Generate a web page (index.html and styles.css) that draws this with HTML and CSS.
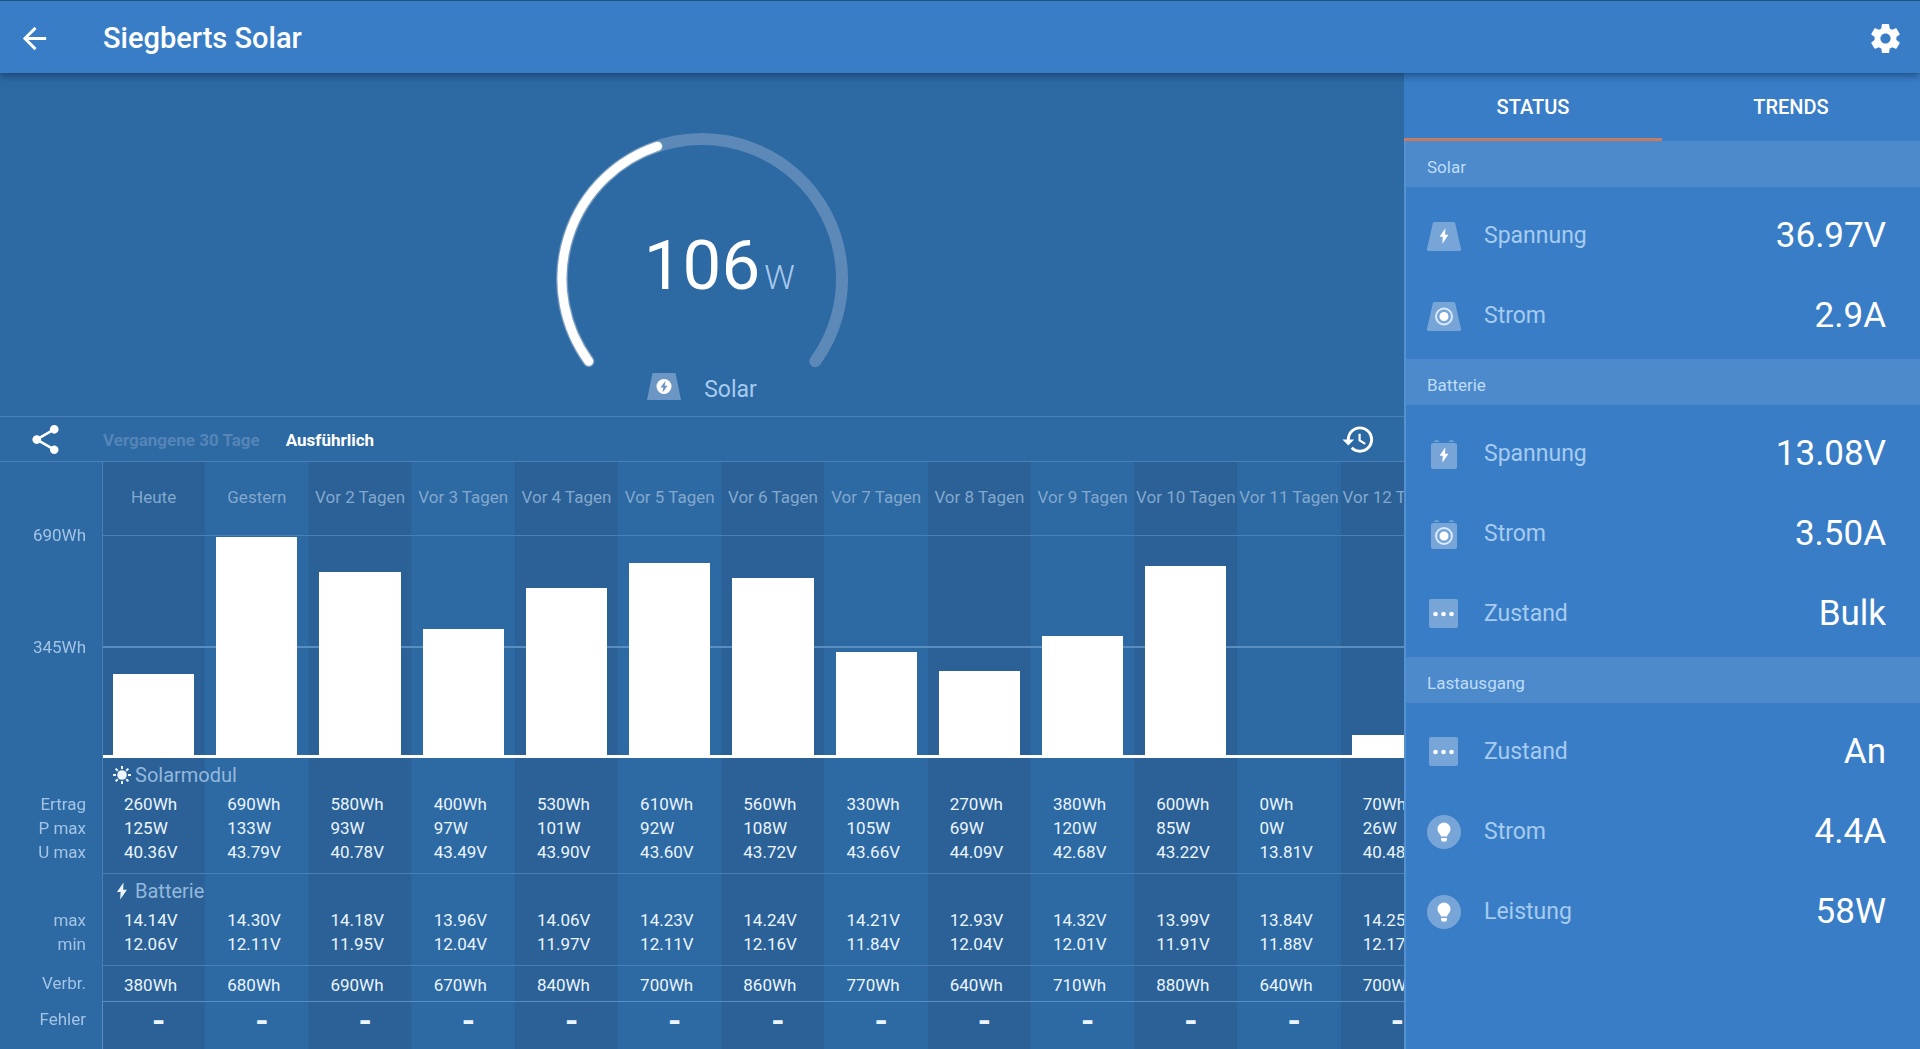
FILE: index.html
```html
<!DOCTYPE html>
<html lang="de">
<head>
<meta charset="utf-8">
<meta name="viewport" content="width=device-width, initial-scale=1">
<title>Siegberts Solar</title>
<link rel="stylesheet" href="styles.css">
</head>
<body>
<svg class="sprite" aria-hidden="true">
  <symbol id="bolt" viewBox="0 0 10 17"><path d="M6.5 0 0 9.4h3.6L3.2 17 10 7.2H6.2z"/></symbol>
  <symbol id="icon-dots" viewBox="0 0 34 34">
    <rect class="tint" x="2" y="2" width="29" height="29" rx="2"/>
    <circle cx="8.500" cy="17" r="2.300"/><circle cx="16.500" cy="17" r="2.300"/><circle cx="24.500" cy="17" r="2.300"/>
  </symbol>
  <symbol id="icon-bulb" viewBox="0 0 34 34">
    <circle class="tint" cx="17" cy="17" r="17"/>
    <path d="M17 7.600a6.500 6.500 0 0 0-6.500 6.500c0 2.400 1.200 4 2.600 5.400.5.500.7 1.500.8 2.100h6.200c.1-.6.300-1.600.8-2.100 1.400-1.400 2.600-3 2.600-5.400A6.500 6.500 0 0 0 17 7.600zM14 23h6v1.300a3 2.500 0 0 1-6 0z"/>
  </symbol>
</svg>

<header class="appbar">
  <button class="icon-button" type="button" aria-label="Zurück">
    <svg class="icon" viewBox="0 0 24 24"><path d="M20 11H7.830l5.590-5.590L12 4l-8 8 8 8 1.410-1.410L7.830 13H20v-2z"/></svg>
  </button>
  <h1 class="appbar-title">Siegberts Solar</h1>
  <button class="icon-button" type="button" aria-label="Einstellungen">
    <svg class="icon" viewBox="0 0 24 24"><path d="M19.430 12.980c.04-.32.070-.64.070-.98s-.03-.66-.07-.98l2.110-1.650c.19-.15.240-.42.120-.64l-2-3.460c-.12-.22-.39-.3-.61-.22l-2.490 1c-.52-.4-1.080-.73-1.690-.98l-.38-2.650C14.460 2.180 14.250 2 14 2h-4c-.25 0-.46.180-.49.420l-.38 2.650c-.61.250-1.170.590-1.690.98l-2.490-1c-.23-.09-.49 0-.61.220l-2 3.460c-.13.220-.07.490.120.640l2.110 1.650c-.04.320-.07.650-.07.980s.03.660.070.980l-2.110 1.650c-.19.150-.24.420-.12.640l2 3.460c.12.220.390.300.610.220l2.490-1c.52.400 1.080.730 1.690.980l.38 2.650c.03.240.240.420.490.420h4c.25 0 .46-.18.490-.42l.38-2.650c.61-.25 1.170-.59 1.690-.98l2.490 1c.23.090.490 0 .61-.22l2-3.460c.12-.22.070-.49-.12-.64l-2.110-1.650zM12 15.500c-1.930 0-3.500-1.570-3.500-3.500s1.570-3.500 3.500-3.500 3.500 1.570 3.500 3.500-1.570 3.500-3.500 3.500z"/></svg>
  </button>
</header>

<main class="layout">
  <div class="overview">
    <section class="hero" aria-label="Aktuelle Leistung">
      <div class="gauge">
        <svg class="gauge-dial" viewBox="0 0 292 240" aria-hidden="true">
          <path class="gauge-track" d="M32.700 228.300A140 140 0 1 1 259.300 228.300"/>
          <path class="gauge-shade" d="M32.700 228.300A140 140 0 0 1 101.500 13.200"/>
          <path class="gauge-level" d="M32.700 228.300A140 140 0 0 1 101.500 13.200"/>
        </svg>
        <p class="reading"><span class="reading-value">106</span><span class="reading-unit">W</span></p>
      </div>
      <p class="hero-caption">
        <svg class="hero-icon" viewBox="0 0 34 27" aria-hidden="true">
          <path class="tint" d="M5.500 0h23L34 27H0z"/>
          <circle cx="17" cy="13.500" r="7.500"/>
          <path class="cut" d="M18.600 7.800 13.400 14.600h2.900l-.7 5 5-6.800h-2.900z"/>
        </svg>
        <span>Solar</span>
      </p>
    </section>

    <div class="toolbar">
      <button class="icon-button" type="button" aria-label="Teilen">
        <svg class="icon" viewBox="0 0 24 24"><path d="M18 16.080c-.76 0-1.440.300-1.960.770L8.910 12.700c.05-.23.090-.46.090-.7s-.04-.47-.09-.7l7.050-4.110c.54.500 1.250.810 2.040.810 1.660 0 3-1.340 3-3s-1.340-3-3-3-3 1.340-3 3c0 .24.040.470.090.7L8.040 9.810C7.500 9.310 6.790 9 6 9c-1.660 0-3 1.340-3 3s1.340 3 3 3c.79 0 1.500-.31 2.040-.81l7.120 4.160c-.05.210-.08.430-.08.650 0 1.610 1.310 2.920 2.920 2.920s2.920-1.310 2.920-2.920-1.310-2.920-2.920-2.920z"/></svg>
      </button>
      <div class="view-tabs" role="tablist">
        <button class="view-tab" type="button" role="tab" aria-selected="false">Vergangene 30 Tage</button>
        <button class="view-tab" type="button" role="tab" aria-selected="true">Ausführlich</button>
      </div>
      <button class="icon-button" type="button" aria-label="Verlauf">
        <svg class="icon" viewBox="0 0 24 24"><path d="M13 3a9 9 0 0 0-9 9H1l3.890 3.890.07.140L9 12H6c0-3.870 3.130-7 7-7s7 3.130 7 7-3.130 7-7 7c-1.930 0-3.680-.79-4.940-2.060l-1.420 1.420A8.950 8.950 0 0 0 13 21a9 9 0 0 0 0-18zm-1 5v5l4.280 2.540.72-1.210-3.500-2.080V8H12z"/></svg>
      </button>
    </div>

    <div class="history">
      <table class="days">
        <colgroup><col class="label-col"><col span="13"></colgroup>
        <thead>
          <tr class="day-names">
            <th class="axis" rowspan="2"><div class="axis-labels"><span>690Wh</span><span>345Wh</span></div></th>
            <th scope="col">Heute</th><th scope="col">Gestern</th><th scope="col">Vor 2 Tagen</th><th scope="col">Vor 3 Tagen</th><th scope="col">Vor 4 Tagen</th><th scope="col">Vor 5 Tagen</th><th scope="col">Vor 6 Tagen</th><th scope="col">Vor 7 Tagen</th><th scope="col">Vor 8 Tagen</th><th scope="col">Vor 9 Tagen</th><th scope="col">Vor 10 Tagen</th><th scope="col">Vor 11 Tagen</th><th scope="col">Vor 12 Tagen</th>
          </tr>
          <tr class="bars">
            <td><div class="bar" style="--wh:260"></div></td>
            <td><div class="bar" style="--wh:690"></div></td>
            <td><div class="bar" style="--wh:580"></div></td>
            <td><div class="bar" style="--wh:400"></div></td>
            <td><div class="bar" style="--wh:530"></div></td>
            <td><div class="bar" style="--wh:610"></div></td>
            <td><div class="bar" style="--wh:560"></div></td>
            <td><div class="bar" style="--wh:330"></div></td>
            <td><div class="bar" style="--wh:270"></div></td>
            <td><div class="bar" style="--wh:380"></div></td>
            <td><div class="bar" style="--wh:600"></div></td>
            <td><div class="bar" style="--wh:0"></div></td>
            <td><div class="bar" style="--wh:70"></div></td>
          </tr>
        </thead>
        <tbody>
          <tr class="group-title group-title-first">
            <td class="label"></td>
            <th colspan="13"><div class="group-name">
              <svg class="group-icon" viewBox="0 0 18 18" aria-hidden="true"><circle cx="9" cy="9" r="4.800"/><path class="rays" d="M9 0v3M9 15v3M0 9h3M15 9h3M2.600 2.600l2.200 2.200M13.200 13.200l2.200 2.200M2.600 15.400l2.200-2.200M13.200 4.800l2.200-2.200"/></svg>
              Solarmodul</div></th>
          </tr>
          <tr><th class="label" scope="row">Ertrag</th><td>260Wh</td><td>690Wh</td><td>580Wh</td><td>400Wh</td><td>530Wh</td><td>610Wh</td><td>560Wh</td><td>330Wh</td><td>270Wh</td><td>380Wh</td><td>600Wh</td><td>0Wh</td><td>70Wh</td></tr>
          <tr><th class="label" scope="row">P max</th><td>125W</td><td>133W</td><td>93W</td><td>97W</td><td>101W</td><td>92W</td><td>108W</td><td>105W</td><td>69W</td><td>120W</td><td>85W</td><td>0W</td><td>26W</td></tr>
          <tr class="group-end"><th class="label" scope="row">U max</th><td>40.36V</td><td>43.79V</td><td>40.78V</td><td>43.49V</td><td>43.90V</td><td>43.60V</td><td>43.72V</td><td>43.66V</td><td>44.09V</td><td>42.68V</td><td>43.22V</td><td>13.81V</td><td>40.48V</td></tr>
        </tbody>
        <tbody class="ruled">
          <tr class="group-title">
            <td class="label"></td>
            <th colspan="13"><div class="group-name">
              <svg class="group-icon" viewBox="-4 0 18 17" aria-hidden="true"><use href="#bolt" width="10" height="17"/></svg>
              Batterie</div></th>
          </tr>
          <tr><th class="label" scope="row">max</th><td>14.14V</td><td>14.30V</td><td>14.18V</td><td>13.96V</td><td>14.06V</td><td>14.23V</td><td>14.24V</td><td>14.21V</td><td>12.93V</td><td>14.32V</td><td>13.99V</td><td>13.84V</td><td>14.25V</td></tr>
          <tr class="group-end"><th class="label" scope="row">min</th><td>12.06V</td><td>12.11V</td><td>11.95V</td><td>12.04V</td><td>11.97V</td><td>12.11V</td><td>12.16V</td><td>11.84V</td><td>12.04V</td><td>12.01V</td><td>11.91V</td><td>11.88V</td><td>12.17V</td></tr>
        </tbody>
        <tbody class="ruled">
          <tr class="usage"><th class="label" scope="row">Verbr.</th><td>380Wh</td><td>680Wh</td><td>690Wh</td><td>670Wh</td><td>840Wh</td><td>700Wh</td><td>860Wh</td><td>770Wh</td><td>640Wh</td><td>710Wh</td><td>880Wh</td><td>640Wh</td><td>700Wh</td></tr>
        </tbody>
        <tbody class="ruled ruled-strong">
          <tr class="errors"><th class="label" scope="row">Fehler</th><td>-</td><td>-</td><td>-</td><td>-</td><td>-</td><td>-</td><td>-</td><td>-</td><td>-</td><td>-</td><td>-</td><td>-</td><td>-</td></tr>
        </tbody>
      </table>
    </div>
  </div>

  <aside class="panel">
    <div class="panel-tabs" role="tablist">
      <button class="panel-tab" type="button" role="tab" aria-selected="true">STATUS</button>
      <button class="panel-tab" type="button" role="tab" aria-selected="false">TRENDS</button>
    </div>
    <div class="panel-body">
      <h2 class="panel-heading">Solar</h2>
      <dl class="readings">
        <div class="row">
          <dt><svg class="row-icon" viewBox="0 0 34 34" aria-hidden="true"><path class="tint" d="M7.500 3h19q1.500 0 1.800 1.500L34 30q.3 2-1.500 2h-31Q-.3 32 0 30L5.700 4.500Q6 3 7.500 3z"/><use href="#bolt" x="12.500" y="9" width="9" height="16"/></svg>Spannung</dt>
          <dd>36.97V</dd>
        </div>
        <div class="row">
          <dt><svg class="row-icon" viewBox="0 0 34 34" aria-hidden="true"><path class="tint" d="M7.500 3h19q1.500 0 1.800 1.500L34 30q.3 2-1.500 2h-31Q-.3 32 0 30L5.700 4.500Q6 3 7.500 3z"/><circle class="ring" cx="17" cy="17.500" r="8"/><circle cx="17" cy="17.500" r="4.500"/></svg>Strom</dt>
          <dd>2.9A</dd>
        </div>
      </dl>

      <h2 class="panel-heading">Batterie</h2>
      <dl class="readings">
        <div class="row">
          <dt><svg class="row-icon" viewBox="0 0 34 34" aria-hidden="true"><rect class="tint" x="4" y="6" width="26" height="26" rx="2"/><path class="tint" d="M6.500 5q1-1.800 2-1.800h2q1 0 2 1.800zM21.500 5q1-1.800 2-1.800h2q1 0 2 1.800z"/><use href="#bolt" x="12.500" y="10" width="9" height="16"/></svg>Spannung</dt>
          <dd>13.08V</dd>
        </div>
        <div class="row">
          <dt><svg class="row-icon" viewBox="0 0 34 34" aria-hidden="true"><rect class="tint" x="4" y="6" width="26" height="26" rx="2"/><path class="tint" d="M6.500 5q1-1.800 2-1.800h2q1 0 2 1.800zM21.500 5q1-1.800 2-1.800h2q1 0 2 1.800z"/><circle class="ring" cx="17" cy="19" r="8"/><circle cx="17" cy="19" r="4.500"/></svg>Strom</dt>
          <dd>3.50A</dd>
        </div>
        <div class="row">
          <dt><svg class="row-icon" aria-hidden="true"><use href="#icon-dots"/></svg>Zustand</dt>
          <dd>Bulk</dd>
        </div>
      </dl>

      <h2 class="panel-heading">Lastausgang</h2>
      <dl class="readings">
        <div class="row">
          <dt><svg class="row-icon" aria-hidden="true"><use href="#icon-dots"/></svg>Zustand</dt>
          <dd>An</dd>
        </div>
        <div class="row">
          <dt><svg class="row-icon" aria-hidden="true"><use href="#icon-bulb"/></svg>Strom</dt>
          <dd>4.4A</dd>
        </div>
        <div class="row">
          <dt><svg class="row-icon" aria-hidden="true"><use href="#icon-bulb"/></svg>Leistung</dt>
          <dd>58W</dd>
        </div>
      </dl>
    </div>
  </aside>
</main>
</body>
</html>
```
FILE: styles.css
```css
:root {
  --bar: #397dc6;
  --base: #2d69a3;
  --stripe: #2b6196;
  --line: #4a80b5;
  --line-strong: #5a8dc0;
  --label: #a5cbef;
  --tint: #77a5d8;
  --axis-width: 102px;
}

* { box-sizing: border-box; }

body {
  margin: 0;
  min-height: 100vh;
  display: flex;
  flex-direction: column;
  background: var(--base);
  color: #fff;
  font-family: Roboto, "Liberation Sans", sans-serif;
  font-size: 17px;
  line-height: 24px;
}

h1, h2, p, dl, dd { margin: 0; }

svg { fill: currentColor; flex: none; }
.sprite { position: absolute; width: 0; height: 0; }
.tint { fill: var(--tint); }
.cut { fill: var(--tint); }

button {
  padding: 0;
  border: 0;
  background: none;
  color: inherit;
  font: inherit;
  cursor: pointer;
}

.icon-button { display: flex; }
.icon { width: 35px; height: 35px; }

/* App bar */
.appbar {
  display: flex;
  align-items: center;
  height: 73px;
  padding: 2px 17px 0;
  border-top: 1px solid #1e5083;
  background: var(--bar);
  box-shadow: 0 2px 8px rgba(0, 20, 50, .5);
  z-index: 2;
}
.appbar-title {
  flex: 1;
  margin-left: 51px;
  font-size: 29px;
  font-weight: 500;
  line-height: 36px;
}

.layout {
  flex: 1;
  display: grid;
  grid-template-columns: minmax(0, 1fr) 516px;
}
.overview { display: flex; flex-direction: column; }

/* Gauge */
.hero {
  display: flex;
  flex-direction: column;
  align-items: center;
  height: 343px;
  padding-top: 60px;
}
.gauge { display: grid; }
.gauge > * { grid-area: 1 / 1; }
.gauge-dial { width: 292px; height: 240px; fill: none; stroke-linecap: round; }
.gauge-track { stroke: #5c89b7; stroke-width: 12; }
.gauge-shade { stroke: #7d9fc2; stroke-width: 11; }
.gauge-level { stroke: #fff; stroke-width: 9; }
.reading {
  display: grid;
  grid-template-columns: 1fr auto 1fr;
  align-items: baseline;
  padding-top: 93px;
}
.reading-value { grid-column: 2; font-size: 69px; line-height: 80px; }
.reading-unit { padding-left: 4px; font-size: 34px; font-weight: 300; color: #a9c9ea; }
.hero-caption {
  display: flex;
  gap: 23px;
  font-size: 23px;
  line-height: 34px;
  color: var(--label);
}
.hero-caption svg { color: #fff; }
.hero-icon { width: 34px; height: 27px; --tint: #6c96c3; }

/* Toolbar */
.toolbar {
  display: flex;
  align-items: center;
  height: 46px;
  padding: 0 28px;
  border: solid var(--line);
  border-width: 1px 0;
}
.view-tabs { flex: 1; display: flex; gap: 26px; margin-left: 40px; padding-top: 2px; }
.view-tab { color: #5585b7; font-weight: 700; }
.view-tab[aria-selected="true"] { color: #fff; }

/* History table */
.history { flex: 1; overflow-x: auto; scrollbar-width: none; }
.days {
  width: 1444px;
  height: 100%;
  table-layout: fixed;
  border-spacing: 0;
  background: linear-gradient(90deg, var(--stripe) 50%, transparent 50%) var(--axis-width) 0 / calc((100% - var(--axis-width)) * 2 / 13) 100%;
}
.label-col { width: var(--axis-width); }
.days th, .days td {
  padding: 0;
  font-weight: 400;
  text-align: left;
  white-space: nowrap;
}
.days td { padding-left: 22px; color: #eaf5ff; vertical-align: top; }
.days .label, .days .axis {
  position: sticky;
  left: 0;
  z-index: 1;
  padding-right: 16px;
  background: var(--base);
  box-shadow: 1px 0 var(--line);
  color: #a3c4e6;
  text-align: right;
  vertical-align: top;
}
.days tr { height: 24px; }
.days .day-names { height: 73px; }
.days .day-names th { padding-bottom: 4px; color: #82a8ce; text-align: center; }
.days .day-names .axis { color: #a3c4e6; text-align: right; }
.axis-labels { display: flex; flex-direction: column; gap: 88px; padding-top: 61px; }
.days .bars { height: 223px; }
.days .bars td {
  padding: 0 11px 1px;
  vertical-align: bottom;
  background:
    linear-gradient(var(--line), var(--line)) 0 0 / 100% 1px no-repeat,
    linear-gradient(var(--line-strong), var(--line-strong)) 0 111px / 100% 2px no-repeat;
  box-shadow: inset 0 -3px #fff;
}
.bar { height: calc(var(--wh) * 220px / 690); background: #fff; }

.days .group-title { height: 35px; }
.days .group-title-first { height: 34px; }
.group-name {
  display: flex;
  align-items: center;
  gap: 4px;
  padding-left: 11px;
  font-size: 20px;
  color: #93b8de;
}
.group-icon { width: 18px; height: 18px; color: #eef6ff; }
.rays { stroke: currentColor; stroke-width: 2; }
.days .group-end { height: 33px; }
.ruled tr:first-child > :not(.label) { border-top: 1px solid var(--line); }
.ruled-strong { --line: var(--line-strong); }
.days .usage { height: 36px; }
.days .usage td { padding-top: 7px; }
.days .usage th { padding-top: 6px; }
.days .errors { height: 48px; }
.days .errors .label { padding-top: 6px; }
.days .errors td { padding: 6px 0 0 50px; font-size: 34px; font-weight: 700; }

/* Status panel */
.panel { display: flex; flex-direction: column; background: var(--bar); }
.panel-tabs { display: grid; grid-template-columns: 1fr 1fr; height: 68px; }
.panel-tab {
  padding-top: 2px;
  border-bottom: 3px solid transparent;
  font-size: 20px;
  font-weight: 500;
}
.panel-tab[aria-selected="true"] { border-color: #c67c62; }
.panel-body { flex: 1; border-left: 2px solid #5590d0; }
.panel-heading {
  padding: 14px 21px 8px;
  background: #4c8acb;
  color: #bfdcf8;
  font-size: 17px;
  font-weight: 400;
}
.readings { padding: 9px 34px 3px 21px; }
.row { display: flex; align-items: center; justify-content: space-between; height: 80px; }
.row dt { display: flex; align-items: center; gap: 23px; font-size: 23px; color: var(--label); }
.row dd { font-size: 35px; line-height: 40px; }
.row-icon { width: 34px; height: 34px; color: #fff; }
.ring { fill: none; stroke: #d8eaff; stroke-width: 2; }
```
